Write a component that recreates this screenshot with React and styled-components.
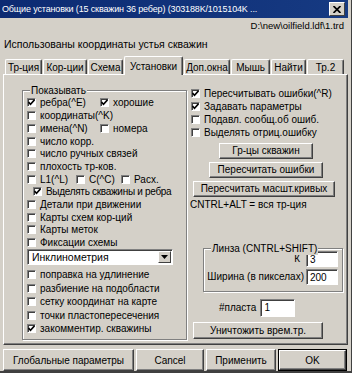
import React from "react";
import styled, { createGlobalStyle } from "styled-components";

const face = "#d4d0c8";
const shadow = "#808080";
const dark = "#404040";

const GlobalStyle = createGlobalStyle`
  html, body { margin: 0; padding: 0; background: ${face}; }
  body {
    font-family: "Liberation Sans", Arial, sans-serif;
    font-size: 10px;
    color: #000;
    white-space: nowrap;
  }
  * { box-sizing: border-box; }
`;

const Window = styled.div`
  width: 352px;
  height: 373px;
  background: ${face};
  border-right: 1px solid ${dark};
  border-bottom: 2px solid ${dark};
  display: flex;
  flex-direction: column;
  overflow: hidden;
`;

const TitleBar = styled.div`
  height: 18px;
  margin-right: 3px;
  background: linear-gradient(90deg, #0c2a72, #163a82);
  color: #fff;
  display: flex;
  align-items: center;
  padding-left: 2px;
  padding-right: 3px;
  gap: 2px;
`;

const TitleText = styled.div`
  flex: 1;
  min-width: 0;
  font-size: 9px;
  letter-spacing: -0.15px;
  overflow: hidden;
`;

const CloseButton = styled.div`
  width: 16px;
  height: 14px;
  flex: none;
  background: ${face};
  border-top: 1px solid #fff;
  border-left: 1px solid #fff;
  border-right: 1px solid ${dark};
  border-bottom: 1px solid ${dark};
  display: flex;
  align-items: center;
  justify-content: center;
`;

const PathLine = styled.div`
  height: 13px;
  line-height: 13px;
  margin-top: 1px;
  font-size: 9.5px;
  text-align: right;
  padding-right: 7px;
`;

const Info = styled.div`
  height: 13px;
  line-height: 13px;
  margin-top: 6px;
  padding-left: 4px;
  font-size: 10.5px;
`;

const TabStrip = styled.div`
  display: flex;
  align-items: flex-end;
  height: 18px;
  margin-top: 5px;
  padding-left: 5px;
  position: relative;
  z-index: 1;
`;

const Tab = styled.div`
  width: ${(p) => p.$w}px;
  height: ${(p) => (p.$active ? 19 : 15)}px;
  margin-bottom: ${(p) => (p.$active ? -1 : 0)}px;
  margin-right: 1px;
  background: ${face};
  border-top: 1px solid #fff;
  border-left: 1px solid #fff;
  border-right: 1px solid ${dark};
  border-radius: 2px 2px 0 0;
  display: flex;
  align-items: center;
  justify-content: center;
  box-shadow: inset -1px 0 0 ${shadow};
`;

const Panel = styled.div`
  height: 271px;
  margin: 0 3px;
  border-top: 1px solid #fff;
  border-left: 1px solid #fff;
  border-right: 1px solid ${dark};
  border-bottom: 1px solid ${dark};
  box-shadow: inset -1px -1px 0 ${shadow};
  display: grid;
  grid-template-columns: 165px 1fr;
  column-gap: 2px;
  padding: 12px 2px 0 18px;
`;

const Group = styled.div`
  position: relative;
  border: 1px solid ${shadow};
  box-shadow: inset 1px 1px 0 #fff, 1px 1px 0 #fff;
`;

const LeftGroup = styled(Group)`
  height: 250px;
  margin-top: 3px;
  padding: 5.6px 0 0 4px;
`;

const Legend = styled.div`
  position: absolute;
  top: -7px;
  left: 7px;
  padding: 0 1px;
  background: ${face};
  line-height: 13px;
`;

const Row = styled.div`
  display: flex;
  align-items: center;
  height: ${(p) => p.$h || 12.7}px;
  padding-left: ${(p) => p.$indent || 0}px;
`;

const Item = styled.label`
  display: flex;
  align-items: center;
  gap: 4px;
  width: ${(p) => (p.$w ? `${p.$w}px` : "auto")};
  letter-spacing: ${(p) => p.$tight || 0}px;
`;

const Box = styled.span`
  width: 9px;
  height: 9px;
  flex: none;
  background: #fff;
  border-top: 1px solid ${shadow};
  border-left: 1px solid ${shadow};
  border-right: 1px solid #fff;
  border-bottom: 1px solid #fff;
  box-shadow: inset 1px 1px 0 ${dark};
  display: flex;
  align-items: center;
  justify-content: center;
`;

const Check = ({ label, checked, w, tight }) => (
  <Item $w={w} $tight={tight}>
    <Box>
      {checked && (
        <svg width="7" height="7" viewBox="0 0 7 7">
          <path d="M0.5 3 L2.5 5.2 L6.5 0.8" stroke="#000" strokeWidth="1.6" fill="none" />
        </svg>
      )}
    </Box>
    {label}
  </Item>
);

const Combo = styled.div`
  width: 146px;
  height: 16px;
  background: #fff;
  border-top: 1px solid ${shadow};
  border-left: 1px solid ${shadow};
  border-right: 1px solid #fff;
  border-bottom: 1px solid #fff;
  box-shadow: inset 1px 1px 0 ${dark};
  display: flex;
  align-items: center;
  padding: 1px 1px 0 4px;
  font-size: 10.5px;
`;

const ComboText = styled.div`
  flex: 1;
`;

const ComboArrow = styled.div`
  width: 13px;
  height: 12px;
  background: ${face};
  border-top: 1px solid #fff;
  border-left: 1px solid #fff;
  border-right: 1px solid ${dark};
  border-bottom: 1px solid ${dark};
  display: flex;
  align-items: center;
  justify-content: center;
`;

const RightCol = styled.div`
  display: flex;
  flex-direction: column;
  align-items: flex-start;
  padding-top: 0.6px;
  padding-left: 2px;
`;

const Button = styled.div`
  width: ${(p) => p.$w}px;
  height: ${(p) => p.$h || 16}px;
  margin-top: ${(p) => p.$mt || 0}px;
  margin-left: ${(p) => p.$ml || 0}px;
  background: ${face};
  border-top: 1px solid #fff;
  border-left: 1px solid #fff;
  border-right: 1px solid ${dark};
  border-bottom: 1px solid ${dark};
  box-shadow: inset -1px -1px 0 ${shadow};
  display: flex;
  align-items: center;
  justify-content: center;
`;

const Note = styled.div`
  margin-top: 2px;
  margin-left: -1px;
  line-height: 12px;
`;

const LensGroup = styled(Group)`
  width: 140px;
  margin-top: 37px;
  margin-left: 12px;
  padding: 2px 4px 6px 0;
  display: flex;
  flex-direction: column;
  gap: 2px;
`;

const FieldRow = styled.div`
  display: flex;
  align-items: center;
  justify-content: flex-end;
  gap: ${(p) => p.$gap || 2}px;
  padding-left: ${(p) => p.$pl || 0}px;
  margin-top: ${(p) => p.$mt || 0}px;
`;

const Input = styled.div`
  width: ${(p) => p.$w || 32}px;
  height: ${(p) => p.$h || 16}px;
  background: #fff;
  border-top: 1px solid ${shadow};
  border-left: 1px solid ${shadow};
  border-right: 1px solid #fff;
  border-bottom: 1px solid #fff;
  box-shadow: inset 1px 1px 0 ${dark};
  padding: 1px 0 0 3px;
  line-height: 13px;
`;

const Footer = styled.div`
  display: flex;
  gap: 2px;
  margin: 4px 0 0 3px;
`;

const FooterButton = styled(Button)`
  height: 22px;
  ${(p) => p.$default && `outline: 1px solid #000; outline-offset: -1px; border-width: 2px;`}
`;

const tabs = [
  ["Тр-ция", 37],
  ["Кор-ции", 44],
  ["Схема", 35],
  ["Установки", 59],
  ["Доп.окна", 46],
  ["Мышь", 39],
  ["Найти", 35],
  ["Тр.2", 37],
];

export default function App() {
  return (
    <>
      <GlobalStyle />
      <Window>
        <TitleBar>
          <TitleText>Общие установки (15 скважин 36 ребер) (303188K/1015104K ...</TitleText>
          <CloseButton>
            <svg width="8" height="7" viewBox="0 0 8 7">
              <path d="M0.5 0 L7.5 7 M7.5 0 L0.5 7" stroke="#000" strokeWidth="1.7" />
            </svg>
          </CloseButton>
        </TitleBar>
        <PathLine>D:\new\oilfield.ldf\1.trd</PathLine>
        <Info>Использованы координаты устья скважин</Info>
        <TabStrip>
          {tabs.map(([t, w]) => (
            <Tab key={t} $w={w} $active={t === "Установки"}>
              {t}
            </Tab>
          ))}
        </TabStrip>
        <Panel>
          <LeftGroup>
            <Legend>Показывать</Legend>
            <Row>
              <Check checked label="ребра(^E)" w={73} />
              <Check checked label="хорошие" />
            </Row>
            <Row>
              <Check label="координаты(^K)" />
            </Row>
            <Row>
              <Check label="имена(^N)" w={73} />
              <Check label="номера" />
            </Row>
            <Row>
              <Check label="число корр." />
            </Row>
            <Row>
              <Check label="число ручных связей" />
            </Row>
            <Row>
              <Check label="плохость тр-ков." />
            </Row>
            <Row>
              <Check label="L1(^L)" w={49} />
              <Check label="C(^C)" w={45} />
              <Check label="Расх." />
            </Row>
            <Row $indent={6}>
              <Check checked tight={-0.3} label="Выделять скважины и ребра" />
            </Row>
            <Row>
              <Check label="Детали при движении" />
            </Row>
            <Row>
              <Check label="Карты схем кор-ций" />
            </Row>
            <Row>
              <Check label="Карты меток" />
            </Row>
            <Row>
              <Check label="Фиксации схемы" />
            </Row>
            <Combo>
              <ComboText>Инклинометрия</ComboText>
              <ComboArrow>
                <svg width="7" height="4" viewBox="0 0 7 4">
                  <path d="M0 0 H7 L3.5 4 Z" fill="#000" />
                </svg>
              </ComboArrow>
            </Combo>
            <Row $h={3.25} />
            <Row $h={13.5}>
              <Check label="поправка на удлинение" />
            </Row>
            <Row $h={13.5}>
              <Check label="разбиение на подобласти" />
            </Row>
            <Row $h={13.5}>
              <Check label="сетку координат на карте" />
            </Row>
            <Row $h={13.5}>
              <Check label="точки пластопересечения" />
            </Row>
            <Row $h={13.5}>
              <Check checked label="закомментир. скважины" />
            </Row>
          </LeftGroup>
          <RightCol>
            <Row>
              <Check checked label="Пересчитывать ошибки(^R)" />
            </Row>
            <Row>
              <Check checked label="Задавать параметры" />
            </Row>
            <Row>
              <Check label="Подавл. сообщ.об ошиб." />
            </Row>
            <Row>
              <Check label="Выделять отриц.ошибку" />
            </Row>
            <Button $w={94} $mt={4.6} $ml={28}>Гр-цы скважин</Button>
            <Button $w={114} $mt={3} $ml={18}>Пересчитать ошибки</Button>
            <Button $w={142} $mt={3} $ml={2}>Пересчитать масшт.кривых</Button>
            <Note>CNTRL+ALT = вся тр-ция</Note>
            <LensGroup>
              <Legend>Линза (CNTRL+SHIFT)</Legend>
              <FieldRow $gap={6}>
                К
                <Input>3</Input>
              </FieldRow>
              <FieldRow>
                Ширина (в пикселах)
                <Input>200</Input>
              </FieldRow>
            </LensGroup>
            <FieldRow $mt={7} $pl={28} $gap={4}>
              #пласта
              <Input $w={35} $h={18}>1</Input>
            </FieldRow>
            <Button $w={130} $h={17} $mt={5} $ml={2}>Уничтожить врем.тр.</Button>
          </RightCol>
        </Panel>
        <Footer>
          <FooterButton $w={131}>Глобальные параметры</FooterButton>
          <FooterButton $w={68}>Cancel</FooterButton>
          <FooterButton $w={70}>Применить</FooterButton>
          <FooterButton $w={69} $default>OK</FooterButton>
        </Footer>
      </Window>
    </>
  );
}
